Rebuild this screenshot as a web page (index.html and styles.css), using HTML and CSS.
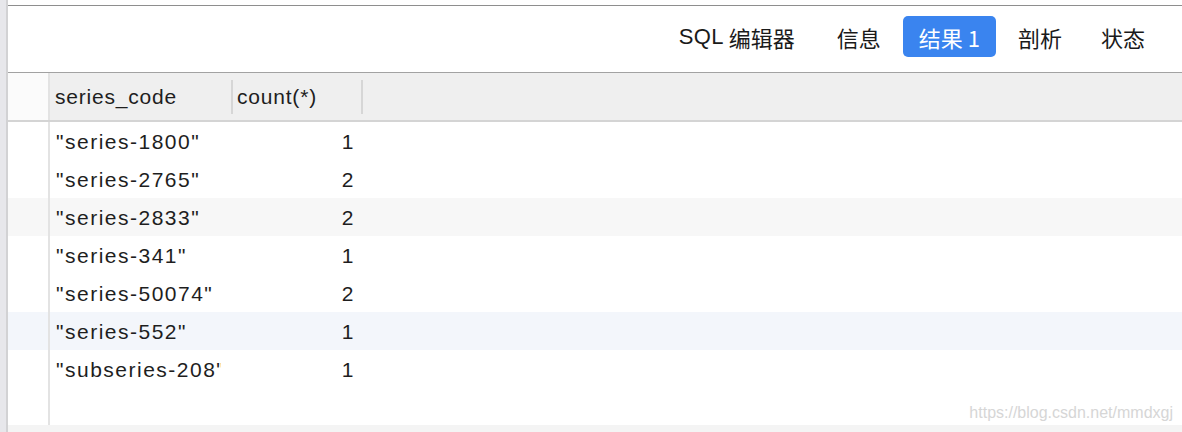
FILE: index.html
```html
<!DOCTYPE html>
<html lang="zh">
<head>
<meta charset="utf-8">
<title>结果 1</title>
<link rel="stylesheet" href="styles.css">
</head>
<body>
<div class="app">
  <div class="strip"></div>
  <div class="main">
    <div class="topgap"></div>
    <div class="tabbar">
      <div class="tab first"><span class="latin">SQL</span> 编辑器</div>
      <div class="tab">信息</div>
      <div class="tab active">结果 1</div>
      <div class="tab">剖析</div>
      <div class="tab">状态</div>
    </div>
    <div class="grid">
      <div class="row head">
        <div class="gutter"></div>
        <div class="cell c1">series_code</div>
        <div class="sep"></div>
        <div class="cell c2">count(*)</div>
        <div class="sep"></div>
        <div class="fill"></div>
      </div>
      <div class="row"><div class="gutter"></div><div class="cell c1">"series-1800"</div><div class="cell c2 num">1</div><div class="fill"></div></div>
      <div class="row"><div class="gutter"></div><div class="cell c1">"series-2765"</div><div class="cell c2 num">2</div><div class="fill"></div></div>
      <div class="row alt"><div class="gutter"></div><div class="cell c1">"series-2833"</div><div class="cell c2 num">2</div><div class="fill"></div></div>
      <div class="row"><div class="gutter"></div><div class="cell c1">"series-341"</div><div class="cell c2 num">1</div><div class="fill"></div></div>
      <div class="row"><div class="gutter"></div><div class="cell c1">"series-50074"</div><div class="cell c2 num">2</div><div class="fill"></div></div>
      <div class="row sel"><div class="gutter"></div><div class="cell c1">"series-552"</div><div class="cell c2 num">1</div><div class="fill"></div></div>
      <div class="row"><div class="gutter"></div><div class="cell c1">"subseries-208"</div><div class="cell c2 num">1</div><div class="fill"></div></div>
      <div class="row empty"><div class="gutter"></div><div class="fill"></div></div>
      <div class="scrollband"></div>
      <div class="watermark">https://blog.csdn.net/mmdxgj</div>
    </div>
  </div>
</div>
</body>
</html>
```

FILE: styles.css
```css
* { box-sizing: border-box; }
html, body { margin: 0; padding: 0; }
body {
  width: 1182px;
  height: 432px;
  overflow: hidden;
  background: #ffffff;
  font-family: "Liberation Sans", Arial, "Noto Sans CJK SC", sans-serif;
  color: #1e1e1e;
}
.app {
  display: flex;
  height: 432px;
}
.strip {
  width: 8px;
  flex: none;
  background: #e7e7eb;
  border-right: 2px solid #d2d2d4;
}
.main {
  flex: 1;
  display: flex;
  flex-direction: column;
  min-width: 0;
}
.topgap {
  height: 5px;
  background: #ffffff;
}
.tabbar {
  height: 68px;
  border-top: 1px solid #8e8e8e;
  border-bottom: 1px solid #a2a2a2;
  display: flex;
  justify-content: flex-end;
  align-items: center;
  gap: 5px;
  padding: 0 20px 5px 0;
  background: #ffffff;
}
.tab {
  height: 41px;
  padding: 0 17px;
  display: flex;
  align-items: center;
  white-space: pre;
  font-family: "Noto Sans CJK SC", sans-serif;
  font-size: 22px;
  color: #1a1a1a;
  border-radius: 5px;
}
.tab.first { margin-right: 3px; }
.tab .latin {
  font-family: "Liberation Sans", Arial, sans-serif;
  letter-spacing: 0.4px;
}
.tab.active {
  background: #3a84ef;
  color: #ffffff;
  padding: 0 16px;
}
.grid {
  flex: 1;
  position: relative;
  display: flex;
  flex-direction: column;
}
.row {
  display: flex;
  height: 38px;
  align-items: stretch;
  font-size: 21px;
  letter-spacing: 1.5px;
}
.row.head {
  height: 49px;
  border-bottom: 2px solid #d4d4d4;
  background: #efefef;
  letter-spacing: 0.8px;
}
.row.alt { background: #f7f7f7; }
.row.sel { background: #f3f6fb; }
.row.empty { flex: 1; }
.gutter {
  width: 42px;
  flex: none;
  border-right: 2px solid #e3e3e3;
}
.head .gutter { background: #fbfbfb; }
.cell {
  display: flex;
  align-items: center;
  padding-top: 2px;
  white-space: nowrap;
  overflow: hidden;
  flex: none;
}
.c1 {
  width: 171px;
  margin-right: 10px;
  padding-left: 6px;
}
.c2 {
  width: 132px;
  padding-left: 6px;
}
.c2.num {
  justify-content: flex-end;
  padding-right: 8px;
}
.head .cell { padding-top: 0; }
.head .c1 { width: 181px; margin-right: 0; padding-left: 5px; }
.head .c2 { width: 128px; padding-left: 4px; }
.sep {
  width: 2px;
  flex: none;
  margin: 7px 0 6px;
  background: #d6d6d6;
}
.fill { flex: 1; }
.scrollband {
  height: 7px;
  background: #f4f4f4;
}
.watermark {
  position: absolute;
  right: 9px;
  bottom: 10px;
  font-size: 16px;
  color: #d6d6d6;
  letter-spacing: 0;
}
```
